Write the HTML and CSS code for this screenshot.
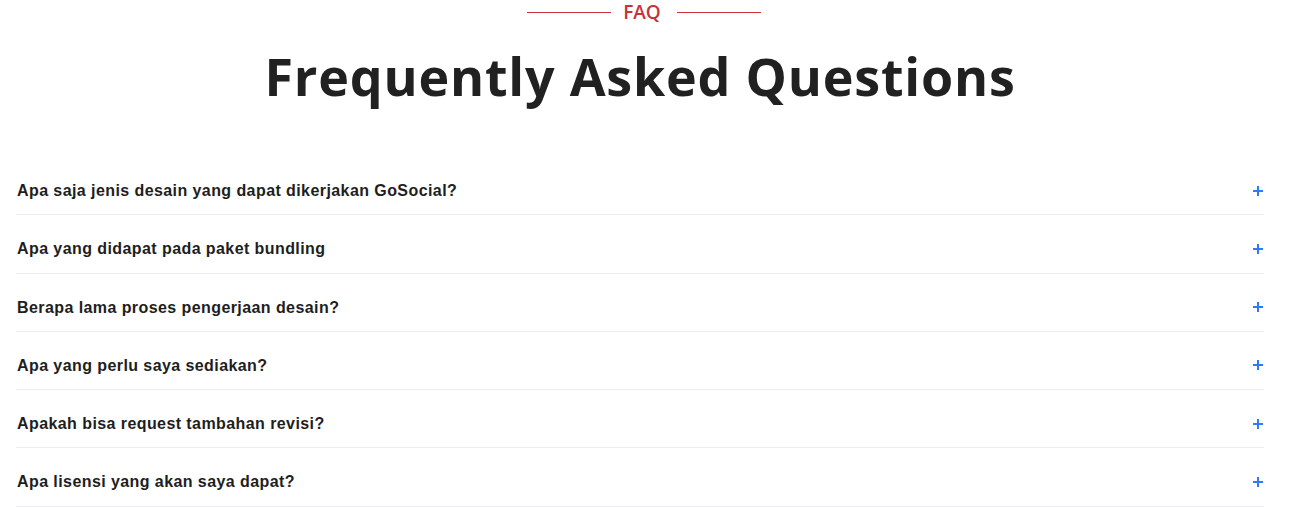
FILE: index.html
```html
<!DOCTYPE html>
<html lang="id">
<head>
<meta charset="utf-8">
<title>FAQ</title>
<link rel="stylesheet" href="styles.css">
</head>
<body>
<section class="faq">
  <div class="eyebrow">
    <span class="eyebrow-line"></span>
    <span class="eyebrow-text">FAQ</span>
    <span class="eyebrow-line"></span>
  </div>
  <h1 class="title">Frequently Asked Questions</h1>
  <div class="list">
    <div class="item"><span class="q">Apa saja jenis desain yang dapat dikerjakan GoSocial?</span><span class="plus"></span></div>
    <div class="item"><span class="q">Apa yang didapat pada paket bundling</span><span class="plus"></span></div>
    <div class="item"><span class="q">Berapa lama proses pengerjaan desain?</span><span class="plus"></span></div>
    <div class="item"><span class="q">Apa yang perlu saya sediakan?</span><span class="plus"></span></div>
    <div class="item"><span class="q">Apakah bisa request tambahan revisi?</span><span class="plus"></span></div>
    <div class="item"><span class="q">Apa lisensi yang akan saya dapat?</span><span class="plus"></span></div>
  </div>
</section>
</body>
</html>
```
FILE: styles.css
```css
* { box-sizing: border-box; }
body {
  margin: 0;
  background: #fff;
  font-family: "Liberation Sans", Arial, sans-serif;
}
.faq {
  width: 1280px;
  padding: 0 16px;
}
.eyebrow {
  display: flex;
  justify-content: center;
  align-items: center;
  height: 25px;
  padding-left: 8px;
}
.eyebrow-line {
  width: 84px;
  height: 1px;
  background: #c8323a;
}
.eyebrow-text {
  color: #c8323a;
  font-family: "Open Sans", sans-serif;
  font-size: 19px;
  font-weight: 600;
  line-height: 25px;
  margin: 0 16px 0 12px;
}
.title {
  margin: 18px 0 0;
  text-align: center;
  font-family: "Open Sans", sans-serif;
  font-weight: 700;
  font-size: 52px;
  line-height: 66px;
  color: #212121;
  letter-spacing: 0.8px;
}
.list {
  margin-top: 48px;
}
.item {
  display: flex;
  justify-content: space-between;
  align-items: center;
  padding: 24px 0 14px 1px;
  border-bottom: 1px solid #ececf2;
  height: 58.25px;
}
.q {
  font-size: 16px;
  font-weight: 700;
  line-height: 19px;
  letter-spacing: 0.42px;
  color: #1e1e1e;
}
.plus {
  position: relative;
  width: 10px;
  height: 10px;
  margin: 0 1px 0 0;
}
.plus::before, .plus::after {
  content: "";
  position: absolute;
  background: #2d7cf6;
}
.plus::before { left: 0; top: 4px; width: 10px; height: 2px; }
.plus::after { left: 4px; top: 0; width: 2px; height: 10px; }
```
